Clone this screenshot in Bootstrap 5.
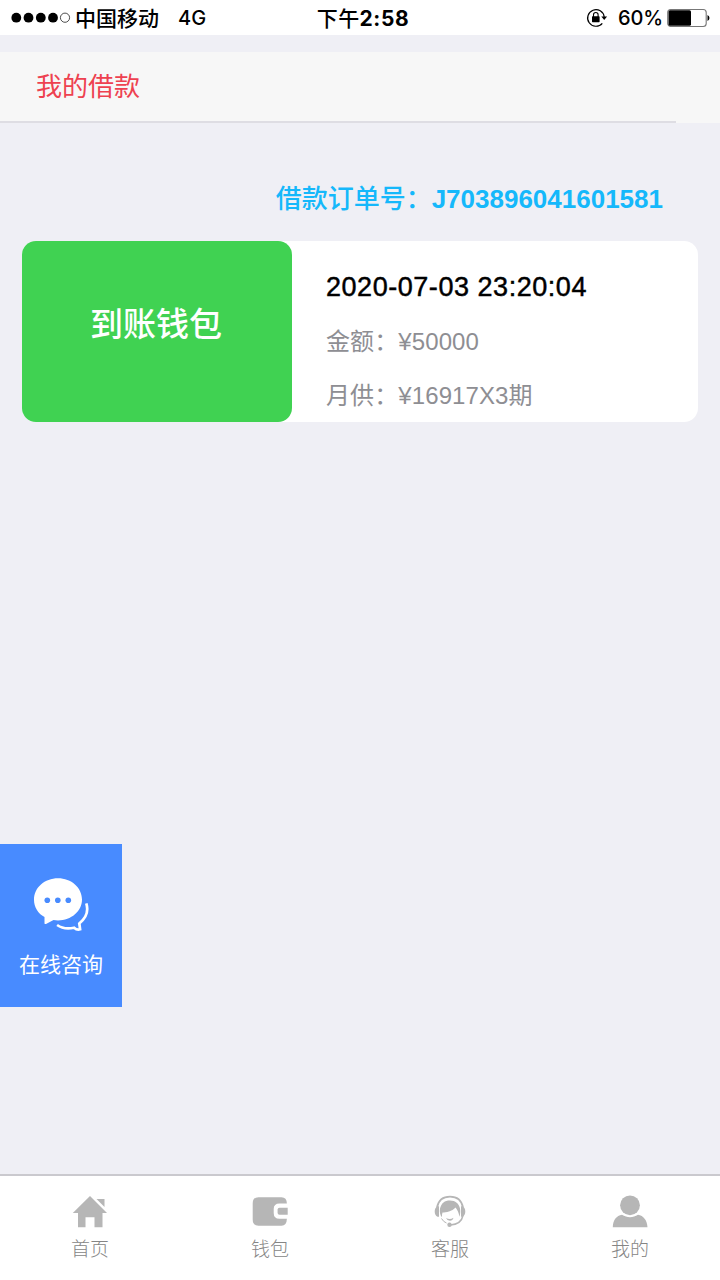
<!DOCTYPE html>
<html lang="zh-CN">
<head>
<meta charset="utf-8">
<meta name="viewport" content="width=device-width, initial-scale=1">
<title>我的借款</title>
<link href="https://cdn.jsdelivr.net/npm/bootstrap@5.3.0/dist/css/bootstrap.min.css" rel="stylesheet">
<style>
  body { background: #efeff5; font-family: "Liberation Sans", "Noto Sans CJK SC", sans-serif; color: #000; }
  .screen { width: 720px; height: 1280px; overflow: hidden; }
  .status { height: 35px; font: 500 20px/35px Inter, "Noto Sans CJK SC", sans-serif; }
  .status > * { height: 35px; }
  .status svg { display: block; flex: none; }
  .status span { padding-top: 2px; }
  .side { flex: 1 1 0; }
  .carrier { font-size: 21px; margin-left: 4px; }
  .net { margin-left: 19px; font-size: 20px; }
  .clock { font-size: 21px; letter-spacing: .3px; margin-left: 6px; padding-top: 1px; }
  .clock b { font-weight: 700; font-size: 21px; letter-spacing: .6px; }
  .percent { margin-left: 10px; letter-spacing: -.1px; }
  .title-bar { height: 71px; margin-top: 17px; background: #f7f7f7; }
  .title-bar h1 { font-size: 26px; line-height: 69px; height: 69px; color: #ee4150; padding: 1px 0 0 36px; }
  .rule { width: 676px; height: 2px; background: #dedde3; }
  .order { margin-top: 56px; height: 40px; line-height: 40px; font-size: 26px; font-weight: 700; color: #15b8fb; padding-right: 57px; }
  .order span { font-weight: 500; }
  .loan { margin: 21.5px 22px 0; height: 181px; border-radius: 14px; }
  .wallet { width: 270px; border-radius: 14px; background: #40d252; font-size: 33px; font-weight: 500; line-height: 40px; padding: 0 2px 12px 0; }
  .detail { padding: 26px 0 0 34px; font-size: 24px; color: #8e8e93; }
  .detail time { display: block; height: 40px; line-height: 40px; font-size: 27px; letter-spacing: .54px; color: #000; -webkit-text-stroke: .45px #000; }
  .detail div { height: 40px; line-height: 40px; margin-top: 14px; padding-top: 1px; letter-spacing: .1px; }
  .consult { width: 122px; height: 163px; margin-top: 422.5px; background: #488bff; font-size: 21px; padding-top: 33px; }
  .consult div { line-height: 30px; margin-top: 16px; }
  .tabs { height: 106px; border-top: 2px solid #cac9ce; font-size: 19px; color: #858585; }
  .tabs a { color: inherit; padding-top: 17px; line-height: 28px; font-weight: 300; }
  .tabs svg { display: block; margin-bottom: 5px; }
</style>
</head>
<body>
<div class="screen d-flex flex-column">
  <header class="status bg-white d-flex flex-shrink-0">
    <div class="side d-flex align-items-center">
      <svg width="71" height="35">
        <circle cx="16.3" cy="17.7" r="4.9"/><circle cx="28.5" cy="17.7" r="4.9"/><circle cx="40.8" cy="17.7" r="4.9"/><circle cx="53" cy="17.7" r="4.9"/>
        <circle cx="65" cy="17.7" r="4.6" fill="none" stroke="#222" stroke-width=".8"/>
      </svg>
      <span class="carrier">中国移动</span><span class="net">4G</span>
    </div>
    <div class="clock">下午<b>2:58</b></div>
    <div class="side d-flex align-items-center justify-content-end">
      <svg width="22" height="35" viewBox="0 0 22 35">
        <path d="M16.3 23.3A8.3 8.3 0 1 1 18.2 17" fill="none" stroke="#000" stroke-width="1.2"/>
        <path d="M15.300 16.500h5.800l-2.900 3.600z"/>
        <rect x="6" y="16.300" width="7.600" height="5.900" rx=".6"/>
        <path d="M7.500 17v-2.200a2.300 2.300 0 0 1 4.600 0v2.200" fill="none" stroke="#000" stroke-width="1.100"/>
      </svg>
      <span class="percent">60%</span>
      <svg class="ms-1" width="53" height="35">
        <rect x=".7" y="9.500" width="38.500" height="17" rx="3" fill="#fff" stroke="#777" stroke-width="1.100"/>
        <rect x="1.500" y="10.300" width="22.500" height="15.400" rx="1.500"/>
        <path d="M40.500 15q2 1 2 3t-2 3z"/>
      </svg>
    </div>
  </header>

  <div class="title-bar flex-shrink-0">
    <h1 class="m-0 fw-normal">我的借款</h1>
    <div class="rule"></div>
  </div>

  <main class="flex-grow-1">
    <div class="order text-end"><span>借款订单号：</span>J703896041601581</div>
    <section class="loan bg-white d-flex">
      <div class="wallet d-flex align-items-center justify-content-center text-white">到账钱包</div>
      <div class="detail">
        <time>2020-07-03 23:20:04</time>
        <div>金额：¥50000</div>
        <div>月供：¥16917X3期</div>
      </div>
    </section>
    <aside class="consult text-white text-center">
      <svg class="d-block mx-auto" width="58" height="57" viewBox="0 0 58 57">
        <path fill="#fff" d="M26 1.300C12.700 1.300 2 10.700 2 22.700c0 7.500 4 13.700 10.500 17.300v6.200c0 .8.800 1.200 1.500.7l7.500-3.900c1.500.3 3 .4 4.500.4 13.300 0 24-9.200 24-20.900S39.300 1.300 26 1.300z"/>
        <g fill="#488bff"><circle cx="15.300" cy="23.300" r="2.800"/><circle cx="25.800" cy="23.300" r="2.800"/><circle cx="36.300" cy="23.300" r="2.800"/></g>
        <path fill="none" stroke="#fff" stroke-width="2.700" d="M54.300 26.300c2.500 8-.5 15-7 20.200l.8 5.800c-2 .6-4 .2-6-1.600-7 1.600-12.500.5-17-2.700"/>
      </svg>
      <div>在线咨询</div>
    </aside>
  </main>

  <nav class="tabs bg-white d-flex flex-shrink-0">
    <a class="col-3 d-flex flex-column align-items-center text-decoration-none" href="#">
      <svg width="36" height="38" viewBox="0 0 36 38" fill="#b6b6b6"><path d="M18 3 35 20H30.500V34.200H22.500V24.200H13.500V34.200H6V20H.8z"/><path d="M24.500 6H32.500V14z"/></svg>
      首页
    </a>
    <a class="col-3 d-flex flex-column align-items-center text-decoration-none" href="#">
      <svg width="36" height="38" viewBox="0 0 36 38" fill="#b6b6b6"><path d="M6.500 4.200H29.500Q34.700 4.200 34.900 10.500H27.500Q21.700 10.500 21.700 16V20Q21.700 25.800 27.500 25.800H34.900Q34.700 32.800 29.500 32.800H6.500Q.7 32.800.7 26.500V10.500Q.7 4.200 6.500 4.200z"/><path d="M27.500 14.700H35.700V21.800H27.500Q25.600 21.800 25.600 20V16.500Q25.600 14.700 27.500 14.700z"/></svg>
      钱包
    </a>
    <a class="col-3 d-flex flex-column align-items-center text-decoration-none" href="#">
      <svg width="36" height="38" viewBox="0 0 36 38" fill="#b6b6b6">
        <path d="M5 14.500C6.500 7 11 3.700 18 3.700S29.500 7 31 14.500" fill="none" stroke="#b6b6b6" stroke-width="1.700"/>
        <path d="M8 15.500C9.500 10 12.500 7.400 18 7.400s9 3 10 8.100c.5 3 .2 6-.6 8.300-.5-3.800-2-7-3.800-9.300C20 18.500 14 19.300 10.500 19.500c-.5 1.500-.7 3-.5 4.800C8 22 7.500 19 8 15.500z"/>
        <path d="M7 13.300v10.400H5.600C3.700 23 2.700 21 2.700 18.500s1-4.500 2.900-5.200zM29 13.300v10.400h1.400c1.900-.7 2.900-2.700 2.900-5.200s-1-4.500-2.900-5.200z"/>
        <path d="M31 22.500C29.800 28.500 25 31.500 18.500 32" fill="none" stroke="#b6b6b6" stroke-width="1.500"/>
        <path d="M14 25q4 2 7.500-.3-.8 3-3.500 3.100T14 25z"/><path d="M9.500 25.500q2 3.500 5 4.500" fill="none" stroke="#b6b6b6"/>
        <circle cx="17.500" cy="31.800" r="2.200"/>
      </svg>
      客服
    </a>
    <a class="col-3 d-flex flex-column align-items-center text-decoration-none" href="#">
      <svg width="36" height="38" viewBox="0 0 36 38" fill="#b6b6b6"><circle cx="18" cy="12.300" r="9.900"/><path d="M.8 34.200C1 27 4.500 22.700 10 21.800c5 3.200 11 3.200 16 0 5.500 1 9 5.300 9.500 12.400z"/></svg>
      我的
    </a>
  </nav>
</div>
<script src="https://cdn.jsdelivr.net/npm/bootstrap@5.3.0/dist/js/bootstrap.bundle.min.js"></script>
</body>
</html>
